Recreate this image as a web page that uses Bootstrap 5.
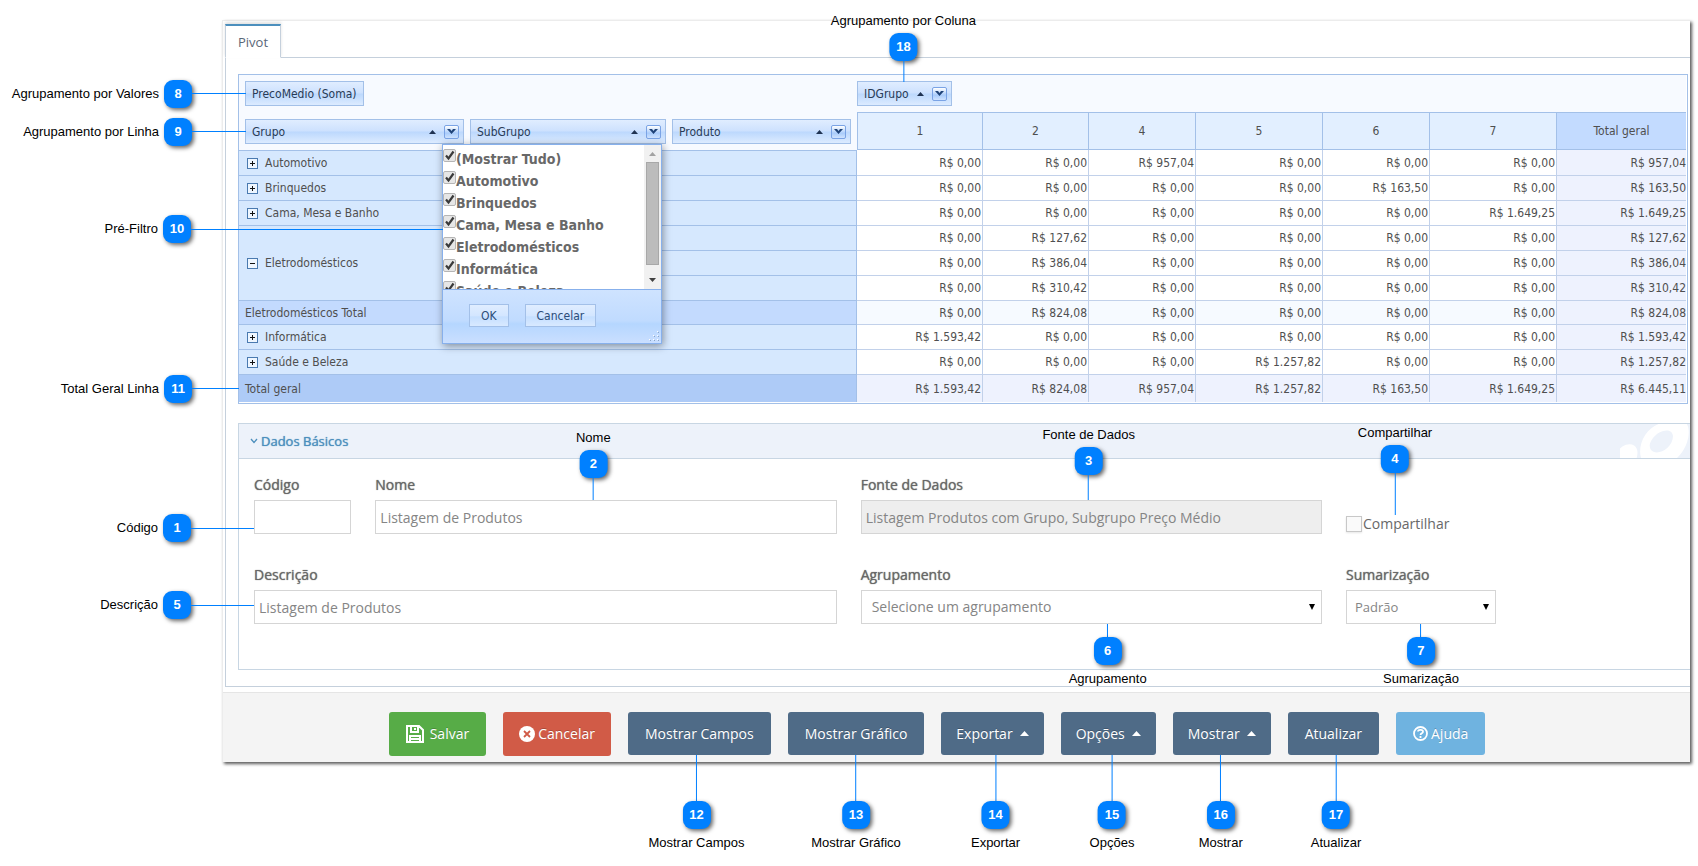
<!DOCTYPE html>
<html lang="pt-BR">
<head>
<meta charset="utf-8">
<meta name="viewport" content="width=device-width, initial-scale=1">
<title>Pivot</title>
<link href="https://cdn.jsdelivr.net/npm/bootstrap@5.3.0/dist/css/bootstrap.min.css" rel="stylesheet">
<style>
  :root { --line: #a3c0e8; --frame: #c5d0dc; --mark-blue: #0080ff; }
  body { font-family: "Open Sans", sans-serif; font-size: 14px; line-height: 20px; color: #686868; background: #fff; padding: 20px 8px 104px 222px; }

  /* Panel and tab */
  .app-panel { border: 1px solid #ececec; border-width: 1px 0 0 1px; padding-top: 3px; box-shadow: 2px 2px 3px rgba(0,0,0,.65); }
  .app-tabs { --bs-nav-tabs-border-color: var(--frame); --bs-nav-tabs-border-radius: 0; margin-left: 2px; }
  .app-tabs .nav-link { padding: 6px 12px 5px; border-color: var(--frame); border-top: 2px solid #4c8fbd; border-bottom-color: #fff; font-size: 13px; color: #5a6778; box-shadow: 0 -2px 3px rgba(0,0,0,.12); }
  .app-tabs .nav-link.active { color: #5a6778; border-color: #4c8fbd var(--frame) #fff; }
  .tab-body { margin-left: 2px; border: 1px solid var(--frame); border-width: 0 0 1px 1px; padding: 16px 0 16px 12px; }

  /* Pivot grid */
  .pivot-frame { border: 1px solid var(--line); padding: 0 1px 1px 0; margin: 0 2px 19px 0; font: 12px/16px "DejaVu Sans Condensed", "DejaVu Sans", sans-serif; color: #4f4f4f; }
  .pivot { table-layout: fixed; width: 100%; border-collapse: separate; border-spacing: 0; }
  .pivot th, .pivot td { font-weight: 400; padding: 0; height: 25px; vertical-align: middle; }
  .pivot .c1 { width: 228px } .pivot .c2 { width: 202px } .pivot .c3 { width: 188px }
  .pivot .w126 { width: 126px } .pivot .w106 { width: 106px } .pivot .w107 { width: 107px } .pivot .w127 { width: 127px } .pivot .w129 { width: 129px }
  .pivot .values-row th { height: 37px; background: #f7faff; vertical-align: top; padding-top: 6px; }
  .pivot .values-row th:first-child { padding-left: 6px; }
  .pivot .heads-row th { height: 38px; background: #f7faff; vertical-align: top; padding: 7px 0 0 3px; }
  .pivot .heads-row th:first-child { padding-left: 6px; }
  .pivot .heads-row .col-head { background: #e2efff; border: solid var(--line); border-width: 1px 1px 1px 0; text-align: center; vertical-align: middle; padding: 0; }
  .pivot .heads-row .first-col { border-left-width: 1px; }
  .pivot .heads-row .grand { background: #c3dbff; border-right: 0; }
  .pivot tbody th { background: #d6e8fe; border: solid var(--line); border-width: 0 1px 1px 0; padding-left: 8px; }
  .pivot tbody tr:first-child > * { height: 26px; }
  .pivot tbody tr:first-child th { border-top-width: 1px; }
  .pivot td { border: solid #c2d1ea; border-width: 0 1px 1px 0; text-align: right; padding-right: 1px; }
  .pivot td:last-child { background: #eef2fe; border-right: 0; padding-right: 0; }
  .pivot .sub-total > * { height: 24px; }
  .pivot .sub-total td:not(:last-child) { background: #f6faff; }
  .pivot .sub-total th { background: #c3dafe; padding-left: 6px; }
  .pivot .grand-total > * { height: 27px; border-bottom: 0; }
  .pivot .grand-total td { background: #eef2fe; }
  .pivot .grand-total th { background: #aecbf7; padding-left: 6px; }
  .toggle { width: 11px; height: 11px; border: 1px solid #4a7ab0; background: #eef6ff; padding: 0; margin-right: 7px; }
  .toggle svg { display: block; width: 9px; height: 9px; }
  .chip { position: relative; height: 25px; border: 1px solid var(--line); background: linear-gradient(#e0edff, #cde1fe 48%, #bcd8fd 52%, #dcebff); color: #283b56; padding: 0 4px 0 6px; }
  .chip-plain { padding-right: 6px; }
  .chip-fill { margin-right: 3px; }
  .chip-last { margin-right: 6px; }
  .sort { width: 7px; height: 4px; margin-right: 8px; }
  .filter-btn { width: 15px; height: 14px; padding: 0; border: 1px solid #7aa3e5; border-radius: 2px; background: linear-gradient(#fff, #a9ccfb 60%, #cfe3ff); }
  .filter-btn svg { display: block; width: 13px; height: 12px; }

  /* Filter pop-up */
  .filter-pop { position: absolute; left: 196px; top: 24px; width: 220px; z-index: 4; background: #fff; border: 1px solid #87b0ec; box-shadow: 1px 2px 8px rgba(0,0,0,.4); }
  .filter-list { height: 144px; overflow: hidden; padding-top: 3px; }
  .filter-list label { display: flex; height: 22px; font: bold 14px/22px "DejaVu Sans Condensed", "DejaVu Sans", sans-serif; color: #686868; white-space: nowrap; }
  .filter-list input { appearance: none; flex: none; width: 13px; height: 13px; margin: 1px 0 0; border: 1px solid #b5b5b5; border-radius: 2px; background: #e6e6e6 url("data:image/svg+xml,%3Csvg xmlns='http://www.w3.org/2000/svg' viewBox='0 0 11 11'%3E%3Cpath d='M2 5.5 4.500 8.500 9.500 1.500' fill='none' stroke='%233a3a3a' stroke-width='2.200'/%3E%3C/svg%3E"); }
  .scroll-rail { width: 17px; background: #f1f1f1; padding: 7px 2px; }
  .scroll-rail svg { width: 7px; height: 4px; }
  .scroll-thumb { width: 13px; height: 103px; background: #bcbcbc; border: 1px solid #a8a8a8; }
  .filter-foot { position: relative; height: 54px; border-top: 1px solid #87b0ec; background: linear-gradient(#cfe3ff, #c0dbff 58%, #b5d6ff 64%, #cadfff); padding: 14px 0 0 26px; gap: 16px; }
  .filter-foot button { height: 23px; border: 1px solid var(--line); background: linear-gradient(#e0edff, #d3e6ff 52%, #c5dfff 56%, #d8e9ff); color: #2c4d79; padding: 0 11px; }
  .grip { position: absolute; right: 1px; bottom: 1px; width: 11px; height: 11px; }

  /* Form box */
  .form-box { border: 1px solid #c8d6e3; border-right: 0; }
  .form-head { height: 35px; background: #edf2fa; border-bottom: 1px solid #c8d6e3; padding-left: 11px; }
  .form-head h2 { font-size: 13px; font-weight: 400; line-height: 34px; color: #4c8fbd; gap: 3px; text-shadow: 0 0 1px #4c8fbd; }
  .form-head .rings { width: 70px; height: 34px; }
  .form-fields { padding: 16px 4px 45px 15px; }
  .form-fields .row + .row { margin-top: 31px; }
  .field-label { display: block; margin-bottom: 5px; text-shadow: 0 0 1px #686868; }
  .field { position: relative; }
  .field .form-control, .field .form-select { height: 34px; border: 1px solid #d5d5d5; border-radius: 0; font-size: 14px; line-height: 20px; color: #858585; padding: 6px 4px; }
  .field .form-control:disabled { background: #eee; }
  .field .form-select { padding: 5px 24px 5px 10px; background: #fff url("data:image/svg+xml,%3Csvg xmlns='http://www.w3.org/2000/svg' width='6' height='6' viewBox='0 0 6 6'%3E%3Cpath d='M0 0H6L3 6z'/%3E%3C/svg%3E") no-repeat right 6px top 13px / 6px 6px; }
  .summary-field { width: 150px; }
  .summary-field .form-select { font-size: 13px; padding-left: 8px; }
  .share { width: 104px; height: 19px; }
  .share label { height: 18px; }
  .share input { appearance: none; width: 16px; height: 16px; margin: 0 1px 0 0; border: 1px solid #c8c8c8; background: #fafafa; box-shadow: 0 1px 2px rgba(0,0,0,.1); }

  /* Button bar */
  .button-bar { margin-top: 5px; border-top: 1px solid #e5e5e5; background: #f4f4f4; padding: 19px 39px 6px 0; gap: 17px; }
  .act { height: 43px; border: 0; border-radius: 3px; font-size: 14px; line-height: 20px; padding: 0 17px; --bs-btn-color: #fff; --bs-btn-bg: #4f6b87; --bs-btn-hover-bg: #435b73; --bs-btn-hover-color: #fff; gap: 7px; text-shadow: 0 -1px 0 rgba(0,0,0,.2); }
  .act-save { --bs-btn-bg: #57ac47; height: 44px; gap: 6px; }
  .act-cancel { --bs-btn-bg: #d15b47; height: 44px; gap: 3px; padding: 0 16px; }
  .act-help { --bs-btn-bg: #6fb3e0; gap: 3px; }
  .act-menu { padding: 0 15px; }

  /* Numbered callouts, tied to the control they point at */
  .callout { position: absolute; z-index: 5; display: flex; align-items: center; font: 13px/16px "Liberation Sans", Arial, sans-serif; color: #000; white-space: nowrap; pointer-events: none; text-shadow: none; }
  .callout b { width: 28px; height: 28px; border-radius: 9px; background: var(--mark-blue); color: #fff; line-height: 28px; text-align: center; box-shadow: 2px 2px 4px rgba(0,0,0,.6); }
  .callout i { background: var(--mark-blue); }
  .callout-left { right: 100%; top: var(--at); transform: translateY(-50%); }
  .callout-left b { margin-left: 5px; }
  .callout-left i { width: var(--len); height: 1px; }
  .callout-up, .callout-down { left: var(--at); transform: translateX(-50%); flex-direction: column; }
  .callout-up { bottom: 100%; }
  .callout-up b { margin-top: 4px; }
  .callout-down { top: 100%; flex-direction: column-reverse; }
  .callout-down b { margin-bottom: 6px; }
  .callout-up i, .callout-down i { width: 1px; height: var(--len); }
</style>
</head>
<body>
<main class="app-panel">
  <ul class="nav nav-tabs app-tabs">
    <li class="nav-item"><button type="button" class="nav-link active">Pivot</button></li>
  </ul>

  <div class="tab-body">
    <div class="pivot-frame">
      <table class="pivot">
        <colgroup><col class="c1"><col class="c2"><col class="c3"><col class="w126"><col class="w106"><col class="w107"><col class="w127"><col class="w107"><col class="w127"><col class="w129"></colgroup>
        <thead>
          <tr class="values-row">
            <th colspan="3">
              <div class="d-flex"><div class="chip chip-plain d-flex align-items-center">PrecoMedio (Soma)
                <span class="callout callout-left" style="--at:50%;--len:54px">Agrupamento por Valores<b>8</b><i></i></span></div></div>
            </th>
            <th colspan="7">
              <div class="d-flex"><div class="chip d-flex align-items-center"><span class="me-2">IDGrupo</span>
                <svg class="sort" viewBox="0 0 7 4"><path d="M0 4 3.500 0 7 4z" fill="#1f3352"/></svg>
                <button type="button" class="filter-btn" aria-label="Filtrar IDGrupo"><svg viewBox="0 0 13 12"><path d="M2 3h3l1.500 2L8 3h3L6.500 8z" fill="#1f4378"/></svg></button>
                <span class="callout callout-up" style="--at:49%;--len:21px">Agrupamento por Coluna<b>18</b><i></i></span></div></div>
            </th>
          </tr>
          <tr class="heads-row">
            <th>
              <div class="chip chip-fill d-flex align-items-center"><span class="me-auto">Grupo</span>
                <svg class="sort" viewBox="0 0 7 4"><path d="M0 4 3.500 0 7 4z" fill="#1f3352"/></svg>
                <button type="button" class="filter-btn" aria-label="Filtrar Grupo"><svg viewBox="0 0 13 12"><path d="M2 3h3l1.500 2L8 3h3L6.500 8z" fill="#1f4378"/></svg></button>
                <span class="callout callout-left" style="--at:50%;--len:54px">Agrupamento por Linha<b>9</b><i></i></span>
                <div class="filter-pop">
                  <div class="d-flex">
                    <div class="filter-list flex-grow-1">
                      <label><input type="checkbox" checked>(Mostrar Tudo)</label>
                      <label><input type="checkbox" checked>Automotivo</label>
                      <label><input type="checkbox" checked>Brinquedos</label>
                      <label><input type="checkbox" checked>Cama, Mesa e Banho</label>
                      <label><input type="checkbox" checked>Eletrodomésticos</label>
                      <label><input type="checkbox" checked>Informática</label>
                      <label><input type="checkbox" checked>Saúde e Beleza</label>
                    </div>
                    <div class="scroll-rail d-flex flex-column align-items-center justify-content-between">
                      <svg viewBox="0 0 7 4"><path d="M0 4 3.500 0 7 4z" fill="#a3a3a3"/></svg>
                      <span class="scroll-thumb"></span>
                      <svg class="mt-2" viewBox="0 0 7 4"><path d="M0 0 3.500 4 7 0z" fill="#404040"/></svg>
                    </div>
                  </div>
                  <div class="filter-foot d-flex align-items-start">
                    <button type="button">OK</button><button type="button">Cancelar</button>
                    <svg class="grip" viewBox="0 0 11 11"><g fill="#8ba4c4"><path d="M9 1h1v1H9zM5 5h1v1H5zM9 5h1v1H9zM1 9h1v1H1zM5 9h1v1H5zM9 9h1v1H9z"/></g><g fill="#fff"><path d="M8 0h1v1H8zM4 4h1v1H4zM8 4h1v1H8zM0 8h1v1H0zM4 8h1v1H4zM8 8h1v1H8z"/></g></svg>
                  </div>
                  <span class="callout callout-left" style="--at:84px;--len:252px">Pré-Filtro<b>10</b><i></i></span>
                </div>
              </div>
            </th>
            <th>
              <div class="chip chip-fill d-flex align-items-center"><span class="me-auto">SubGrupo</span>
                <svg class="sort" viewBox="0 0 7 4"><path d="M0 4 3.500 0 7 4z" fill="#1f3352"/></svg>
                <button type="button" class="filter-btn" aria-label="Filtrar SubGrupo"><svg viewBox="0 0 13 12"><path d="M2 3h3l1.500 2L8 3h3L6.500 8z" fill="#1f4378"/></svg></button></div>
            </th>
            <th>
              <div class="chip chip-last d-flex align-items-center"><span class="me-auto">Produto</span>
                <svg class="sort" viewBox="0 0 7 4"><path d="M0 4 3.500 0 7 4z" fill="#1f3352"/></svg>
                <button type="button" class="filter-btn" aria-label="Filtrar Produto"><svg viewBox="0 0 13 12"><path d="M2 3h3l1.500 2L8 3h3L6.500 8z" fill="#1f4378"/></svg></button></div>
            </th>
            <th class="col-head first-col">1</th><th class="col-head">2</th><th class="col-head">4</th><th class="col-head">5</th><th class="col-head">6</th><th class="col-head">7</th><th class="col-head grand">Total geral</th>
          </tr>
        </thead>
        <tbody>
          <tr><th colspan="3"><div class="d-flex align-items-center"><button type="button" class="toggle" aria-label="Expandir"><svg viewBox="0 0 9 9"><path d="M2 4.500h5M4.500 2v5" stroke="#111"/></svg></button>Automotivo</div></th>
            <td>R$ 0,00</td><td>R$ 0,00</td><td>R$ 957,04</td><td>R$ 0,00</td><td>R$ 0,00</td><td>R$ 0,00</td><td>R$ 957,04</td></tr>
          <tr><th colspan="3"><div class="d-flex align-items-center"><button type="button" class="toggle" aria-label="Expandir"><svg viewBox="0 0 9 9"><path d="M2 4.500h5M4.500 2v5" stroke="#111"/></svg></button>Brinquedos</div></th>
            <td>R$ 0,00</td><td>R$ 0,00</td><td>R$ 0,00</td><td>R$ 0,00</td><td>R$ 163,50</td><td>R$ 0,00</td><td>R$ 163,50</td></tr>
          <tr><th colspan="3"><div class="d-flex align-items-center"><button type="button" class="toggle" aria-label="Expandir"><svg viewBox="0 0 9 9"><path d="M2 4.500h5M4.500 2v5" stroke="#111"/></svg></button>Cama, Mesa e Banho</div></th>
            <td>R$ 0,00</td><td>R$ 0,00</td><td>R$ 0,00</td><td>R$ 0,00</td><td>R$ 0,00</td><td>R$ 1.649,25</td><td>R$ 1.649,25</td></tr>
          <tr><th rowspan="3"><div class="d-flex align-items-center"><button type="button" class="toggle" aria-label="Recolher"><svg viewBox="0 0 9 9"><path d="M2 4.500h5" stroke="#111"/></svg></button>Eletrodomésticos</div></th><th colspan="2"></th>
            <td>R$ 0,00</td><td>R$ 127,62</td><td>R$ 0,00</td><td>R$ 0,00</td><td>R$ 0,00</td><td>R$ 0,00</td><td>R$ 127,62</td></tr>
          <tr><th colspan="2"></th>
            <td>R$ 0,00</td><td>R$ 386,04</td><td>R$ 0,00</td><td>R$ 0,00</td><td>R$ 0,00</td><td>R$ 0,00</td><td>R$ 386,04</td></tr>
          <tr><th colspan="2"></th>
            <td>R$ 0,00</td><td>R$ 310,42</td><td>R$ 0,00</td><td>R$ 0,00</td><td>R$ 0,00</td><td>R$ 0,00</td><td>R$ 310,42</td></tr>
          <tr class="sub-total"><th colspan="3">Eletrodomésticos Total</th>
            <td>R$ 0,00</td><td>R$ 824,08</td><td>R$ 0,00</td><td>R$ 0,00</td><td>R$ 0,00</td><td>R$ 0,00</td><td>R$ 824,08</td></tr>
          <tr><th colspan="3"><div class="d-flex align-items-center"><button type="button" class="toggle" aria-label="Expandir"><svg viewBox="0 0 9 9"><path d="M2 4.500h5M4.500 2v5" stroke="#111"/></svg></button>Informática</div></th>
            <td>R$ 1.593,42</td><td>R$ 0,00</td><td>R$ 0,00</td><td>R$ 0,00</td><td>R$ 0,00</td><td>R$ 0,00</td><td>R$ 1.593,42</td></tr>
          <tr><th colspan="3"><div class="d-flex align-items-center"><button type="button" class="toggle" aria-label="Expandir"><svg viewBox="0 0 9 9"><path d="M2 4.500h5M4.500 2v5" stroke="#111"/></svg></button>Saúde e Beleza</div></th>
            <td>R$ 0,00</td><td>R$ 0,00</td><td>R$ 0,00</td><td>R$ 1.257,82</td><td>R$ 0,00</td><td>R$ 0,00</td><td>R$ 1.257,82</td></tr>
          <tr class="grand-total"><th colspan="3" class="position-relative">Total geral<span class="callout callout-left" style="--at:50%;--len:47px">Total Geral Linha<b>11</b><i></i></span></th>
            <td>R$ 1.593,42</td><td>R$ 824,08</td><td>R$ 957,04</td><td>R$ 1.257,82</td><td>R$ 163,50</td><td>R$ 1.649,25</td><td>R$ 6.445,11</td></tr>
        </tbody>
      </table>
    </div>

    <section class="form-box">
      <header class="form-head d-flex align-items-start">
        <h2 class="m-0 d-flex align-items-center">
          <svg width="8" height="6" viewBox="0 0 8 6"><path d="M1 1l3 3.500L7 1" fill="none" stroke="#4c8fbd" stroke-width="1.300"/></svg>Dados Básicos
        </h2>
        <svg class="rings ms-auto" viewBox="0 0 70 34"><g fill="#fff"><ellipse cx="6" cy="33" rx="10" ry="14" transform="rotate(35 6 33)"/><path fill-rule="evenodd" d="M21 34C17 20 27 2 42-1H66C72 6 68 24 57 34ZM31 26C37 33 53 24 53 12 52 3 39 6 33 14 29 19 29 23 31 26Z"/></g></svg>
      </header>
      <form class="form-fields">
        <div class="row">
          <div class="col-1"><label class="field-label" for="codigo">Código</label>
            <div class="field"><input class="form-control" id="codigo" type="text"><span class="callout callout-left" style="--at:28px;--len:63px">Código<b>1</b><i></i></span></div></div>
          <div class="col-4"><label class="field-label" for="nome">Nome</label>
            <div class="field"><input class="form-control" id="nome" type="text" value="Listagem de Produtos"><span class="callout callout-up" style="--at:218px;--len:22px">Nome<b>2</b><i></i></span></div></div>
          <div class="col-4"><label class="field-label" for="fonte">Fonte de Dados</label>
            <div class="field"><input class="form-control" id="fonte" type="text" value="Listagem Produtos com Grupo, Subgrupo Preço Médio" disabled><span class="callout callout-up" style="--at:228px;--len:25px">Fonte de Dados<b>3</b><i></i></span></div></div>
          <div class="col-3 d-flex align-items-end">
            <div class="field share"><label class="d-flex align-items-center"><input type="checkbox">Compartilhar</label><span class="callout callout-up" style="--at:49px;--len:42px">Compartilhar<b>4</b><i></i></span></div></div>
        </div>
        <div class="row">
          <div class="col-5"><label class="field-label" for="descricao">Descrição</label>
            <div class="field"><input class="form-control" id="descricao" type="text" value="Listagem de Produtos"><span class="callout callout-left" style="--at:15px;--len:63px">Descrição<b>5</b><i></i></span></div></div>
          <div class="col-4"><label class="field-label" for="agrupamento">Agrupamento</label>
            <div class="field"><select class="form-select" id="agrupamento"><option>Selecione um agrupamento</option></select><span class="callout callout-down" style="--at:247px;--len:13px">Agrupamento<b>6</b><i></i></span></div></div>
          <div class="col-3"><label class="field-label" for="sumarizacao">Sumarização</label>
            <div class="field summary-field"><select class="form-select" id="sumarizacao"><option>Padrão</option></select><span class="callout callout-down" style="--at:50%;--len:13px">Sumarização<b>7</b><i></i></span></div></div>
        </div>
      </form>
    </section>
  </div>

  <footer class="button-bar d-flex justify-content-center align-items-start">
    <button type="button" class="btn act act-save d-flex align-items-center">
      <svg width="18" height="18" viewBox="0 0 18 18" fill="none" stroke="#fff" stroke-width="2"><path d="M1 1h12l4 4v12H1zM5 1v6h7V1M4 17v-6h10v6M4 14h10" /><path d="M9 3v2"/></svg>Salvar</button>
    <button type="button" class="btn act act-cancel d-flex align-items-center">
      <svg width="16" height="16" viewBox="0 0 16 16"><circle cx="8" cy="8" r="8" fill="#fff"/><path d="M5 5l6 6M11 5l-6 6" stroke="#d15b47" stroke-width="1.800"/></svg>Cancelar</button>
    <div class="position-relative"><button type="button" class="btn act">Mostrar Campos</button><span class="callout callout-down" style="--at:48%;--len:46px">Mostrar Campos<b>12</b><i></i></span></div>
    <div class="position-relative"><button type="button" class="btn act">Mostrar Gráfico</button><span class="callout callout-down" style="--at:50%;--len:46px">Mostrar Gráfico<b>13</b><i></i></span></div>
    <div class="position-relative"><button type="button" class="btn act act-menu d-flex align-items-center">Exportar<svg width="9" height="5" viewBox="0 0 9 5"><path d="M0 5 4.500 0 9 5z" fill="#fff"/></svg></button><span class="callout callout-down" style="--at:53%;--len:46px">Exportar<b>14</b><i></i></span></div>
    <div class="position-relative"><button type="button" class="btn act act-menu d-flex align-items-center">Opções<svg width="9" height="5" viewBox="0 0 9 5"><path d="M0 5 4.500 0 9 5z" fill="#fff"/></svg></button><span class="callout callout-down" style="--at:54%;--len:46px">Opções<b>15</b><i></i></span></div>
    <div class="position-relative"><button type="button" class="btn act act-menu d-flex align-items-center">Mostrar<svg width="9" height="5" viewBox="0 0 9 5"><path d="M0 5 4.500 0 9 5z" fill="#fff"/></svg></button><span class="callout callout-down" style="--at:49%;--len:46px">Mostrar<b>16</b><i></i></span></div>
    <div class="position-relative"><button type="button" class="btn act">Atualizar</button><span class="callout callout-down" style="--at:53%;--len:46px">Atualizar<b>17</b><i></i></span></div>
    <button type="button" class="btn act act-help d-flex align-items-center">
      <svg width="15" height="15" viewBox="0 0 15 15" fill="none" stroke="#fff" stroke-width="1.800"><circle cx="7.500" cy="7.500" r="6.500"/><path d="M5 5.500c.3-2.200 5-2.200 5 .2 0 1.600-2.300 1.600-2.500 3.300M7.500 10v2"/></svg>Ajuda</button>
  </footer>
</main>
<script src="https://cdn.jsdelivr.net/npm/bootstrap@5.3.0/dist/js/bootstrap.bundle.min.js"></script>
</body>
</html>
